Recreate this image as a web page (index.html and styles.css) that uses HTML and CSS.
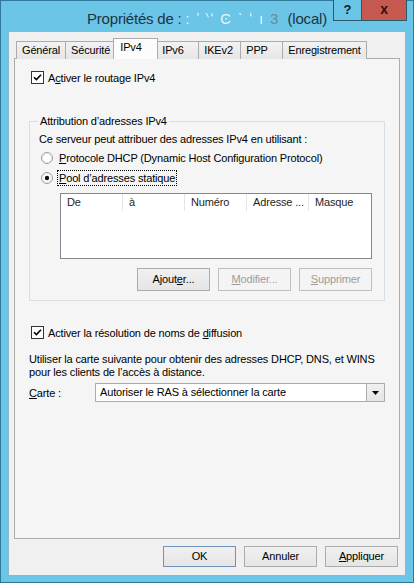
FILE: index.html
```html
<!DOCTYPE html>
<html>
<head>
    <title>Propriétés</title>
    <link rel="stylesheet" href="styles.css">
</head>
<body>
<div class="window">
    <div class="titlebar">
        <div></div>
        <div class="title">Propriétés de : <span class="masked">: ʼ ‵ʻ Ͼ ˋ ʻ ı <b>3</b></span> (local)</div>
        <div class="caption">
            <div class="cap help">?</div>
            <div class="cap close">x</div>
        </div>
    </div>

    <div class="client">
        <div class="tabs">
            <div class="tab">Général</div>
            <div class="tab">Sécurité</div>
            <div class="tab active">IPv4</div>
            <div class="tab">IPv6</div>
            <div class="tab">IKEv2</div>
            <div class="tab">PPP</div>
            <div class="tab">Enregistrement</div>
        </div>

        <div class="page">
            <label class="check first">
                <svg class="box" width="13" height="13" viewBox="0 0 13 13"><rect x="0.5" y="0.5" width="12" height="12" fill="#fff" stroke="#333"/><path d="M3 6.2 L5.4 8.6 L10 3.8" fill="none" stroke="#000" stroke-width="1.6"/></svg>
                <span>A<u>c</u>tiver le routage IPv4</span>
            </label>

            <fieldset class="group">
                <legend>Attribution d’adresses IPv4</legend>
                <div class="line">Ce serveur peut attribuer des adresses IPv4 en utilisant :</div>
                <div class="radio">
                    <svg width="12" height="12" viewBox="0 0 12 12"><circle cx="6" cy="6" r="5.5" fill="#fff" stroke="#9a9a9a"/><circle cx="6" cy="6" r="4.5" fill="none" stroke="#e2e2e2"/></svg>
                    <span><u>P</u>rotocole DHCP (Dynamic Host Configuration Protocol)</span>
                </div>
                <div class="radio">
                    <svg width="12" height="12" viewBox="0 0 12 12"><circle cx="6" cy="6" r="5.5" fill="#fff" stroke="#9a9a9a"/><circle cx="6" cy="6" r="4.5" fill="none" stroke="#e2e2e2"/><circle cx="6" cy="6" r="2.2" fill="#111"/></svg>
                    <span class="focus"><u>P</u>ool d’adresses statique</span>
                </div>

                <div class="listview">
                    <div class="lv-head">
                        <div class="col">De</div>
                        <div class="col">à</div>
                        <div class="col">Numéro</div>
                        <div class="col">Adresse ...</div>
                        <div class="col">Masque</div>
                    </div>
                </div>

                <div class="lv-buttons">
                    <div class="btn">Ajout<u>e</u>r...</div>
                    <div class="btn disabled"><u>M</u>odifier...</div>
                    <div class="btn disabled"><u>S</u>upprimer</div>
                </div>
            </fieldset>

            <label class="check second">
                <svg class="box" width="13" height="13" viewBox="0 0 13 13"><rect x="0.5" y="0.5" width="12" height="12" fill="#fff" stroke="#333"/><path d="M3 6.2 L5.4 8.6 L10 3.8" fill="none" stroke="#000" stroke-width="1.6"/></svg>
                <span>Activer la résolution de noms de <u>d</u>iffusion</span>
            </label>

            <p class="info">Utiliser la carte suivante pour obtenir des adresses DHCP, DNS, et WINS<br>pour les clients de l’accès à distance.</p>

            <div class="carte">
                <span class="carte-label"><u>C</u>arte :</span>
                <div class="combo">
                    <span class="combo-text">Autoriser le RAS à sélectionner la carte</span>
                    <span class="combo-arrow">
                        <svg width="7" height="4" viewBox="0 0 7 4"><path d="M0 0 H7 L3.5 4 Z" fill="#000"/></svg>
                    </span>
                </div>
            </div>
        </div>

        <div class="footer">
            <div class="btn default">OK</div>
            <div class="btn">Annuler</div>
            <div class="btn"><u>A</u>ppliquer</div>
        </div>
    </div>
</div>
</body>
</html>
```

FILE: styles.css
```css
body {
    margin: 0;
    font-family: "Liberation Sans", Arial, sans-serif;
    font-size: 11px;
    letter-spacing: -0.15px;
    color: #000;
}
u {
    text-decoration-thickness: 1px;
    text-underline-offset: 1px;
}
.window {
    width: 414px;
    height: 583px;
    box-sizing: border-box;
    border: 1px solid #2f7898;
    background: #6bc5e7;
    display: flex;
    flex-direction: column;
}

/* title bar */
.titlebar {
    height: 30px;
    display: grid;
    grid-template-columns: 1fr auto 1fr;
}
.title {
    font-size: 15px;
    letter-spacing: -0.2px;
    color: #1d3442;
    padding-top: 7px;
    white-space: nowrap;
}
.masked {
    display: inline-block;
    width: 98px;
    color: #e9f5fa;
    letter-spacing: 1.2px;
    filter: blur(0.5px);
}
.masked b {
    font-weight: normal;
    color: #6d8794;
}
.caption {
    display: flex;
    justify-content: flex-end;
    align-items: flex-start;
    margin-top: -1px;
    margin-right: 6px;
}
.cap {
    height: 20px;
    border: 1px solid #2a5870;
    border-top: none;
    font-weight: bold;
    font-size: 13px;
    text-align: center;
    line-height: 19px;
    color: #101c2c;
}
.help {
    width: 27px;
    background: #6bc5e7;
    border-right: none;
}
.close {
    width: 44px;
    background: #c75a50;
    color: #2a1212;
    font-size: 14px;
}

/* client area */
.client {
    flex: 1;
    margin: 0 7px 6px;
    border: 1px solid #8db8cb;
    background: #f0f0f0;
    padding: 6px 5px 0;
    display: flex;
    flex-direction: column;
}
.tabs {
    display: flex;
    align-items: flex-end;
    height: 21px;
    padding-left: 2px;
    position: relative;
    z-index: 1;
}
.tab {
    min-width: 42px;
    box-sizing: border-box;
    height: 18px;
    line-height: 17px;
    padding: 0 5px;
    border: 1px solid #acacac;
    border-bottom: none;
    border-right: none;
    background: linear-gradient(#f2f2f2, #e6e6e6);
}
.tab:last-child {
    border-right: 1px solid #acacac;
}
.tab.active {
    min-width: 45px;
    height: 21px;
    line-height: 16px;
    padding: 0 6px;
    margin: 0 -2px;
    border-right: 1px solid #acacac;
    background: #fcfcfc;
    position: relative;
    z-index: 2;
}
.tab.active + .tab {
    border-left: none;
    padding-left: 6px;
}

.page {
    height: 479px;
    margin-top: -1px;
    border: 1px solid #acacac;
    background: #f5f5f5;
    padding: 0 14px;
    display: flex;
    flex-direction: column;
}

.check {
    display: flex;
    align-items: center;
    gap: 4px;
    height: 15px;
    padding-left: 2px;
}
.check.first {
    margin-top: 11px;
}
.check.second {
    margin-top: 24px;
}

.group {
    margin: 29px 0 0;
    padding: 0 12px 9px 9px;
    border: 1px solid #d5dfe5;
    min-width: 0;
}
.group legend {
    padding: 0 2px;
    margin-left: -1px;
    line-height: 14px;
}
.line {
    line-height: 14px;
    margin-top: 4px;
    margin-bottom: 2px;
}
.radio {
    display: flex;
    align-items: center;
    gap: 6px;
    height: 20px;
    padding-left: 2px;
}
.focus {
    outline: 1px dotted #000;
    outline-offset: 1px;
}

.listview {
    margin: 5px 0 0 21px;
    height: 64px;
    border: 1px solid #828790;
    background: #fff;
}
.lv-head {
    display: flex;
    height: 17px;
}
.col {
    width: 62px;
    padding-left: 6px;
    box-sizing: border-box;
    line-height: 17px;
    border-right: 1px solid #e5e5e5;
    color: #1e1e1e;
}
.col:last-child {
    border-right: none;
}

.lv-buttons {
    display: flex;
    justify-content: flex-end;
    gap: 8px;
    margin-top: 9px;
}
.btn {
    width: 73px;
    height: 21px;
    box-sizing: border-box;
    border: 1px solid #acacac;
    background: linear-gradient(#f0f0f0, #e5e5e5);
    text-align: center;
    line-height: 19px;
}
.lv-buttons .btn {
    height: 23px;
    line-height: 21px;
}
.btn.disabled {
    color: #9c9c9c;
    border-color: #bfbfbf;
    background: #f4f4f4;
}
.btn.default {
    border-color: #6f93b8;
}

.info {
    margin: 13px 0 0;
    line-height: 13px;
}

.carte {
    display: flex;
    align-items: center;
    margin-top: 4px;
}
.carte-label {
    width: 66px;
}
.combo {
    flex: 1;
    display: flex;
    height: 19px;
    box-sizing: border-box;
    border: 1px solid #acacac;
    background: #fff;
}
.combo-text {
    flex: 1;
    padding-left: 4px;
    line-height: 17px;
}
.combo-arrow {
    width: 17px;
    display: flex;
    align-items: center;
    justify-content: center;
    border-left: 1px solid #acacac;
    background: linear-gradient(#f0f0f0, #e5e5e5);
}

.footer {
    display: flex;
    justify-content: flex-end;
    gap: 8px;
    margin-top: 7px;
    padding-right: 2px;
}
```
